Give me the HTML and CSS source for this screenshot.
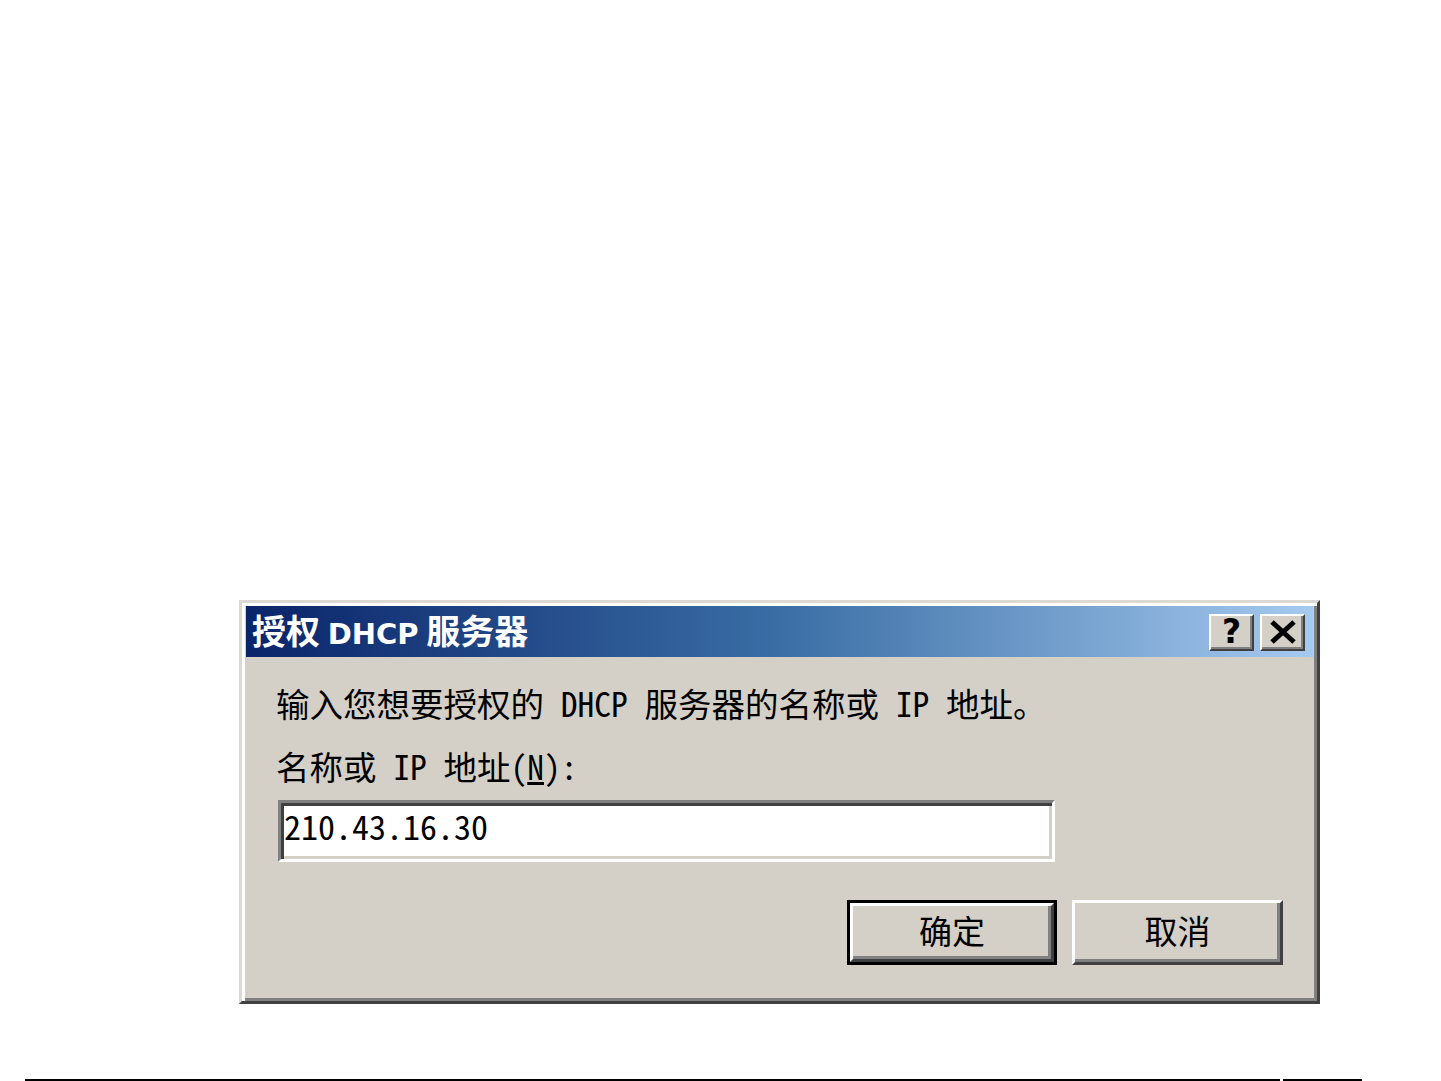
FILE: index.html
```html
<!DOCTYPE html>
<html lang="zh-CN">
<head>
<meta charset="utf-8">
<title>授权 DHCP 服务器</title>
<link rel="stylesheet" href="styles.css">
</head>
<body>
<div class="page">
  <div class="dialog">
    <div class="titlebar">
      <div class="title">授权 <span class="lat">DHCP</span> 服务器</div>
      <div class="caption-btns">
        <div class="cbtn help">?</div>
        <div class="cbtn close">
          <svg width="28" height="24" viewBox="0 0 28 24"><path d="M3 2 L25 22 M25 2 L3 22" stroke="#000" stroke-width="5" fill="none"/></svg>
        </div>
      </div>
    </div>
    <div class="content">
      <div class="line first">输入您想要授权的<span class="hw"> DHCP </span>服务器的名称或<span class="hw"> IP </span>地址。</div>
      <div class="line second">名称或<span class="hw"> IP </span>地址<span class="hw">(<u>N</u>):</span></div>
      <div class="field"><span class="hw">210.43.16.30</span></div>
      <div class="buttons">
        <div class="btn default"><div class="btn-face">确定</div></div>
        <div class="btn"><div class="btn-face">取消</div></div>
      </div>
    </div>
  </div>
  <div class="baseline">
    <div class="seg seg-a"></div>
    <div class="seg seg-b"></div>
  </div>
</div>
</body>
</html>
```

FILE: styles.css
```css
html, body {
  margin: 0;
  padding: 0;
  background: #ffffff;
}
body {
  font-family: "Noto Sans CJK SC", "Noto Sans", sans-serif;
  width: 1441px;
  height: 1081px;
  overflow: hidden;
}
.page {
  padding-top: 600px;
}
.dialog {
  margin-left: 239px;
  width: 1081px;
  height: 404px;
  box-sizing: border-box;
  background: #d4d0c8;
  border: 3px solid;
  border-color: #dcd9d2 #404040 #404040 #dcd9d2;
  box-shadow: inset 3px 3px 0 #ffffff, inset -3px -3px 0 #808080;
  padding: 3px 4px 4px 4px;
  display: flex;
  flex-direction: column;
}
.titlebar {
  height: 51px;
  background: linear-gradient(to right, #0a246a 0%, #3a6ea5 50%, #a6caf0 100%);
  display: flex;
  align-items: center;
  justify-content: space-between;
  padding: 0 8px 0 6px;
}
.title {
  color: #ffffff;
  font-weight: 700;
  font-size: 34px;
  line-height: 51px;
  white-space: nowrap;
}
.title .lat {
  font-family: "DejaVu Sans", "Noto Sans", sans-serif;
  font-size: 29px;
}
.caption-btns {
  display: flex;
  gap: 6px;
  padding-top: 1px;
}
.cbtn {
  width: 45px;
  height: 37px;
  box-sizing: border-box;
  background: #d4d0c8;
  border: 2px solid;
  border-color: #ffffff #404040 #404040 #ffffff;
  box-shadow: inset -2px -2px 0 #808080;
  display: flex;
  align-items: center;
  justify-content: center;
}
.cbtn.help {
  font-family: "DejaVu Sans", sans-serif;
  font-weight: 700;
  font-size: 33px;
  line-height: 1;
  color: #000;
  padding-bottom: 1px;
}
.content {
  flex: 1;
  padding: 26px 30px 0 30px;
  display: flex;
  flex-direction: column;
}
.line {
  font-size: 33.5px;
  line-height: 40px;
  color: #000;
  white-space: pre;
}
.hw {
  font-feature-settings: "hwid" 1;
}
.line.second {
  margin-top: 23px;
}
.field {
  margin-top: 14px;
  margin-left: 2px;
  width: 777px;
  height: 62px;
  box-sizing: border-box;
  background: #ffffff;
  border: 3px solid;
  border-color: #808080 #ffffff #ffffff #808080;
  box-shadow: inset 3px 3px 0 #404040, inset -3px -3px 0 #d4d0c8;
  padding: 3px 0 0 3px;
  font-size: 34px;
  line-height: 39px;
  color: #000;
}
.buttons {
  margin-top: 38px;
  display: flex;
  justify-content: flex-end;
  gap: 15px;
}
.btn {
  width: 211px;
  height: 65px;
  box-sizing: border-box;
  display: flex;
}
.btn-face {
  flex: 1;
  box-sizing: border-box;
  background: #d4d0c8;
  border: 3px solid;
  border-color: #ffffff #404040 #404040 #ffffff;
  box-shadow: inset -3px -3px 0 #808080;
  font-size: 33px;
  line-height: 1;
  color: #000;
  display: flex;
  align-items: center;
  justify-content: center;
  padding-bottom: 4px;
}
.btn.default {
  width: 210px;
  border: 3px solid #000000;
}
.baseline {
  margin-top: 75px;
  display: flex;
  padding-left: 25px;
  gap: 3px;
}
.seg {
  height: 2px;
  background: #000000;
}
.seg-a {
  width: 1255px;
}
.seg-b {
  width: 79px;
}
```
